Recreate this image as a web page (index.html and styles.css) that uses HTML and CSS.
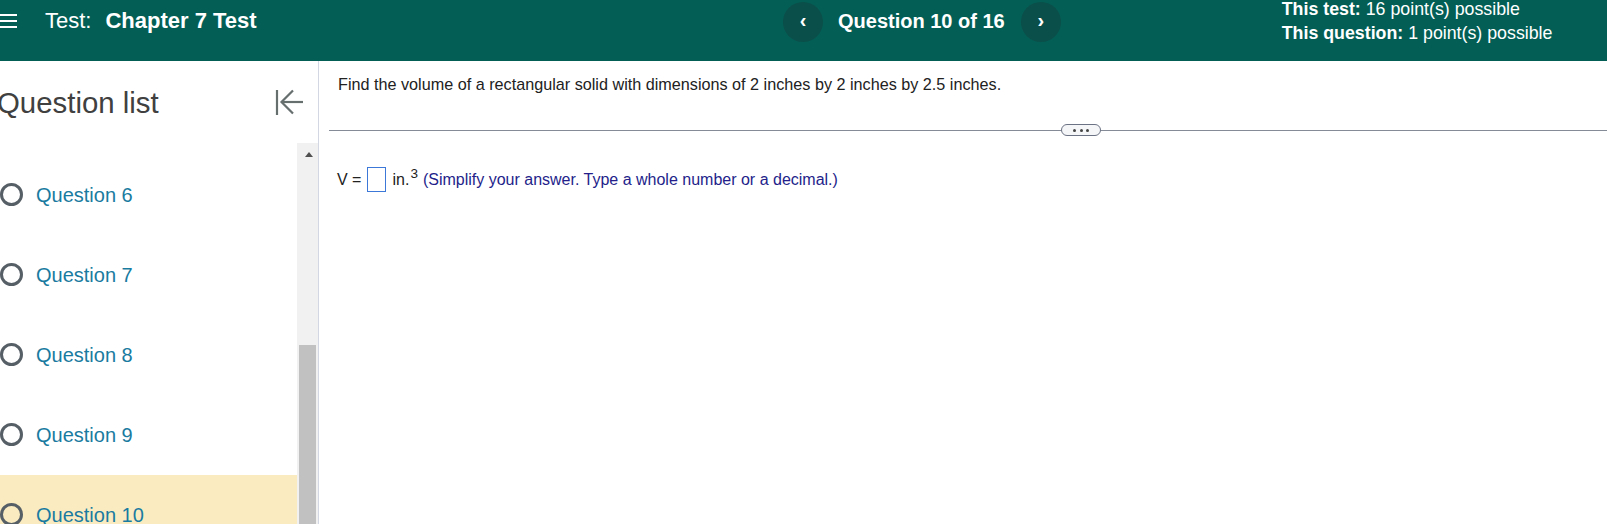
FILE: index.html
```html
<!DOCTYPE html>
<html>
<head>
<meta charset="utf-8">
<link rel="stylesheet" href="styles.css">
</head>
<body>
<header class="topbar">
  <div class="left">
    <div class="hamburger"><span></span><span></span><span></span></div>
    <div class="title"><span class="lbl">Test:</span><b>Chapter 7 Test</b></div>
  </div>
  <div class="center">
    <div class="navbtn">&#8249;</div>
    <div class="qnum">Question 10 of 16</div>
    <div class="navbtn">&#8250;</div>
  </div>
  <div class="right">
    <div><b>This test:</b> 16 point(s) possible</div>
    <div><b>This question:</b> 1 point(s) possible</div>
  </div>
</header>
<div class="body">
  <aside class="sidebar">
    <div class="side-head">
      <div class="side-title">Question list</div>
      <svg class="collapse" width="30" height="28" viewBox="0 0 30 28">
        <line x1="2" y1="2" x2="2" y2="27" stroke="#676e6e" stroke-width="2.2"/>
        <line x1="7" y1="14" x2="28" y2="14" stroke="#676e6e" stroke-width="2.2"/>
        <polyline points="18,2.5 6.5,14 18,25.5" fill="none" stroke="#676e6e" stroke-width="2.2"/>
      </svg>
    </div>
    <div class="side-scroll">
      <ul class="qlist">
        <li class="qitem"><span class="radio"></span>Question 6</li>
        <li class="qitem"><span class="radio"></span>Question 7</li>
        <li class="qitem"><span class="radio"></span>Question 8</li>
        <li class="qitem"><span class="radio"></span>Question 9</li>
        <li class="qitem current"><span class="radio"></span>Question 10</li>
      </ul>
      <div class="scrollbar">
        <div class="up"></div>
        <div class="thumb"></div>
      </div>
    </div>
  </aside>
  <main class="main">
    <p class="question">Find the volume of a rectangular solid with dimensions of 2 inches by 2 inches by 2.5 inches.</p>
    <div class="divider"><span class="pill"><i></i><i></i><i></i></span></div>
    <div class="answer">
      <span class="veq">V =</span>
      <span class="box"></span>
      <span class="unit">in.<sup>3</sup></span>
      <span class="hint">(Simplify your answer. Type a whole number or a decimal.)</span>
    </div>
  </main>
</div>
</body>
</html>
```
FILE: styles.css
```css
* { box-sizing: border-box; }
html, body { margin: 0; padding: 0; }
body {
  font-family: "Liberation Sans", Arial, sans-serif;
  background: #fff;
  width: 1607px;
  height: 524px;
  overflow: hidden;
  color: #222;
}
.topbar {
  height: 61px;
  background: #035f56;
  color: #fff;
  display: flex;
  align-items: flex-start;
}
.left {
  display: flex;
  align-items: center;
  height: 41px;
  width: 783px;
  flex-shrink: 0;
}
.hamburger {
  width: 17px;
  display: flex;
  flex-direction: column;
  gap: 4px;
  margin-right: 28px;
  margin-top: 0px;
}
.hamburger span {
  display: block;
  height: 2px;
  background: #fff;
}
.title {
  font-size: 22px;
}
.title .lbl { margin-right: 14px; }
.center {
  display: flex;
  align-items: center;
  height: 41px;
  margin-top: 1px;
  flex-shrink: 0;
}
.navbtn {
  width: 40px;
  height: 40px;
  border-radius: 50%;
  background: #0b4f4a;
  display: flex;
  align-items: center;
  justify-content: center;
  font-size: 20px;
  font-weight: bold;
  line-height: 1;
  padding-bottom: 3px;
}
.qnum {
  font-size: 20px;
  font-weight: bold;
  margin: 0 16px 0 15px;
  white-space: nowrap;
}
.right {
  font-size: 17.8px;
  line-height: 23.5px;
  margin-top: -2px;
  margin-left: 221px;
  white-space: nowrap;
}
.body {
  display: flex;
  height: 463px;
}
.sidebar {
  width: 319px;
  border-right: 1px solid #d3d6e3;
  display: flex;
  flex-direction: column;
  flex-shrink: 0;
}
.side-head {
  height: 82px;
  display: flex;
  align-items: center;
  justify-content: space-between;
  padding-right: 13px;
}
.side-title {
  font-size: 29.4px;
  color: #404040;
  margin-left: -3px;
  margin-top: 1px;
  white-space: nowrap;
}
.collapse { margin-top: -1px; }
.side-scroll {
  flex: 1;
  display: flex;
  overflow: hidden;
}
.qlist {
  list-style: none;
  margin: 0;
  padding: 12px 0 0 0;
  width: 297px;
  flex-shrink: 0;
}
.qitem {
  height: 80px;
  display: flex;
  align-items: center;
  font-size: 20px;
  color: #1a7ba0;
}
.qitem.current { background: #faecc0; }
.radio {
  width: 23px;
  height: 23px;
  border: 3px solid #565e66;
  border-radius: 50%;
  margin-right: 13px;
  margin-top: -1px;
  flex-shrink: 0;
}
.scrollbar {
  width: 21px;
  background: #f1f1f1;
  display: flex;
  flex-direction: column;
  align-items: center;
}
.up {
  width: 0;
  height: 0;
  border-left: 4.5px solid transparent;
  border-right: 4.5px solid transparent;
  border-bottom: 5px solid #505050;
  margin-top: 9px;
  margin-left: 2px;
}
.thumb {
  width: 17px;
  flex: 1;
  background: #c1c1c1;
  margin-top: 188px;
}
.main {
  flex: 1;
  padding-left: 10px;
}
.question {
  margin: 0;
  padding: 13px 0 0 9px;
  font-size: 16.2px;
  line-height: 20px;
  color: #222;
  white-space: nowrap;
}
.divider {
  margin-top: 36px;
  height: 1px;
  background: #868b98;
  position: relative;
}
.pill {
  position: absolute;
  left: 732px;
  top: -6px;
  width: 40px;
  height: 12px;
  border: 1.5px solid #6b7283;
  border-radius: 7px;
  background: #f5f6f8;
  display: flex;
  align-items: center;
  justify-content: center;
  gap: 3.5px;
}
.pill i {
  width: 3px;
  height: 3px;
  border-radius: 50%;
  background: #444;
}
.answer {
  margin-top: 36px;
  padding-left: 8px;
  display: flex;
  align-items: center;
  font-size: 16px;
  color: #222;
  white-space: nowrap;
}
.box {
  width: 19px;
  height: 25px;
  border: 1.6px solid #3b78d8;
  margin: 0 6px 0 6px;
}
.unit sup {
  font-size: 13.5px;
  vertical-align: 0;
  position: relative;
  top: -7px;
  margin-left: 1px;
}
.hint {
  color: #231e8a;
  margin-left: 5px;
}
```
